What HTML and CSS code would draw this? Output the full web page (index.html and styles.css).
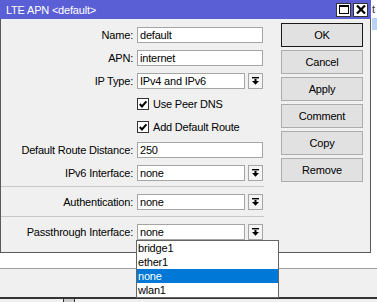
FILE: index.html
```html
<!DOCTYPE html>
<html>
<head>
<meta charset="utf-8">
<link rel="stylesheet" href="styles.css">
</head>
<body>
<div class="screen">
  <div class="top">
    <div class="win">
      <div class="titlebar">
        <span class="title">LTE APN &lt;default&gt;</span>
        <div class="tb-btns">
          <span class="tb-btn"><svg width="10" height="9" viewBox="0 0 10 9"><rect x="0.5" y="0.5" width="9" height="8" fill="none" stroke="#000" stroke-width="1"/><rect x="0" y="0" width="10" height="2" fill="#000"/></svg></span>
          <span class="tb-btn"><svg width="10" height="9" viewBox="0 0 10 9"><path d="M1 0.5 L9 8.5 M9 0.5 L1 8.5" stroke="#000" stroke-width="2.2" fill="none"/></svg></span>
        </div>
      </div>
      <div class="body">
        <div class="form">
          <div class="row"><label class="lbl">Name:</label><div class="tb">default</div></div>
          <div class="row"><label class="lbl">APN:</label><div class="tb">internet</div></div>
          <div class="row"><label class="lbl">IP Type:</label><div class="combo"><div class="tb">IPv4 and IPv6</div><span class="arrow"><svg width="7" height="8" viewBox="0 0 7 8"><rect x="0" y="0" width="7" height="1.4" fill="#000"/><rect x="2.5" y="2" width="2" height="2.5" fill="#000"/><polygon points="0,4 7,4 3.5,7.8" fill="#000"/></svg></span></div></div>
          <div class="row"><span></span><div class="chk"><span class="box"><svg width="10" height="10" viewBox="0 0 10 10"><path d="M1.8 5 L4 7.4 L8.4 2.4" stroke="#000" stroke-width="2" fill="none"/></svg></span><span>Use Peer DNS</span></div></div>
          <div class="row"><span></span><div class="chk"><span class="box"><svg width="10" height="10" viewBox="0 0 10 10"><path d="M1.8 5 L4 7.4 L8.4 2.4" stroke="#000" stroke-width="2" fill="none"/></svg></span><span>Add Default Route</span></div></div>
          <div class="row"><label class="lbl">Default Route Distance:</label><div class="tb">250</div></div>
          <div class="row"><label class="lbl">IPv6 Interface:</label><div class="combo"><div class="tb">none</div><span class="arrow"><svg width="7" height="8" viewBox="0 0 7 8"><rect x="0" y="0" width="7" height="1.4" fill="#000"/><rect x="2.5" y="2" width="2" height="2.5" fill="#000"/><polygon points="0,4 7,4 3.5,7.8" fill="#000"/></svg></span></div></div>
          <div class="sep"></div>
          <div class="row"><label class="lbl">Authentication:</label><div class="combo"><div class="tb">none</div><span class="arrow"><svg width="7" height="8" viewBox="0 0 7 8"><rect x="0" y="0" width="7" height="1.4" fill="#000"/><rect x="2.5" y="2" width="2" height="2.5" fill="#000"/><polygon points="0,4 7,4 3.5,7.8" fill="#000"/></svg></span></div></div>
          <div class="sep sep2"></div>
          <div class="row"><label class="lbl">Passthrough Interface:</label><div class="combo"><div class="tb">none</div><span class="arrow"><svg width="7" height="8" viewBox="0 0 7 8"><rect x="0" y="0" width="7" height="1.4" fill="#000"/><rect x="2.5" y="2" width="2" height="2.5" fill="#000"/><polygon points="0,4 7,4 3.5,7.8" fill="#000"/></svg></span></div></div>
        </div>
        <div class="buttons">
          <div class="btn default">OK</div>
          <div class="btn">Cancel</div>
          <div class="btn">Apply</div>
          <div class="btn">Comment</div>
          <div class="btn">Copy</div>
          <div class="btn">Remove</div>
        </div>
      </div>
    </div>
    <div class="side">
      <span class="side-t">t</span>
      <div class="side-sel"></div>
    </div>
  </div>
  <div class="under">
    <div class="u-white"></div>
    <div class="u-gray"></div>
    <div class="u-dark"></div>
    <div class="u-foot"><span class="u-knob"></span></div>
  </div>
  <ul class="dropdown">
    <li>bridge1</li>
    <li>ether1</li>
    <li class="sel">none</li>
    <li>wlan1</li>
  </ul>
</div>
</body>
</html>
```
FILE: styles.css
```css
* { box-sizing: border-box; }
html, body { margin: 0; padding: 0; }
body {
  width: 377px;
  height: 302px;
  overflow: hidden;
  background: #fff;
  font-family: "Liberation Sans", Arial, sans-serif;
  font-size: 11px;
  letter-spacing: -0.2px;
  color: #000;
}
.screen {
  position: relative;
  width: 377px;
  height: 302px;
  display: flex;
  flex-direction: column;
}
.top {
  display: flex;
  height: 253px;
}
.win {
  width: 371px;
  height: 253px;
  display: flex;
  flex-direction: column;
  background: #f0f0f0;
  border: 1px solid #5a5a5a;
  border-top: none;
}
.titlebar {
  height: 19px;
  margin: 0 -1px;
  background: #5a5fd6;
  color: #fff;
  display: flex;
  align-items: center;
  justify-content: space-between;
  padding: 0 3px 0 6px;
}
.title { font-size: 11px; }
.tb-btns { display: flex; gap: 2px; }
.tb-btn {
  width: 15px;
  height: 14px;
  background: #fff;
  border: 1px solid #333;
  display: flex;
  align-items: center;
  justify-content: center;
}
.body {
  flex: 1;
  display: flex;
  padding-top: 4px;
}
.form {
  width: 263px;
  display: flex;
  flex-direction: column;
}
.row {
  height: 23px;
  display: grid;
  grid-template-columns: 132px 126px;
  column-gap: 4px;
  align-items: center;
}
.lbl { text-align: right; white-space: nowrap; }
.tb {
  height: 16px;
  background: #fff;
  border: 1px solid #a5a5a5;
  padding: 0 2px;
  line-height: 14px;
  white-space: nowrap;
  overflow: hidden;
}
.combo {
  display: grid;
  grid-template-columns: 108px 15px;
  column-gap: 3px;
}
.arrow {
  height: 16px;
  border: 1px solid #a5a5a5;
  background: #f4f4f4;
  display: flex;
  align-items: center;
  justify-content: center;
}
.chk {
  display: flex;
  align-items: center;
  gap: 4px;
}
.box {
  width: 12px;
  height: 12px;
  border: 1px solid #333;
  background: #fff;
  display: flex;
  align-items: center;
  justify-content: center;
}
.sep {
  height: 1px;
  background: #c8c8c8;
  margin: 2px 0 3px;
}
.sep2 { margin: 3px 0 3px; }
.buttons {
  margin-left: 17px;
  width: 82px;
  display: flex;
  flex-direction: column;
  gap: 3px;
}
.btn {
  height: 24px;
  background: #e1e1e1;
  border: 1px solid #adadad;
  display: flex;
  align-items: center;
  justify-content: center;
  font-size: 11px;
}
.btn.default { border-color: #1a1a1a; }
.side {
  flex: 1;
  display: flex;
  flex-direction: column;
  padding-left: 1px;
}
.side-t { height: 18px; line-height: 18px; font-size: 11px; color: #333; }
.side-sel { height: 12px; background: #b8d4f4; }
.under {
  flex: 1;
  display: flex;
  flex-direction: column;
}
.u-white { height: 15px; background: #fff; }
.u-gray { height: 29px; background: #f0f0f0; border-top: 1px solid #a0a0a0; }
.u-dark { height: 2px; background: #333; }
.u-foot { flex: 1; background: #f0f0f0; position: relative; }
.u-knob {
  position: absolute;
  left: 63px;
  top: 0;
  width: 12px;
  height: 4px;
  border: 1px solid #333;
  border-top: none;
  background: #ccc;
}
.dropdown {
  position: absolute;
  left: 136px;
  top: 240px;
  width: 143px;
  margin: 0;
  padding: 0;
  list-style: none;
  background: #fff;
  border: 1px solid #646464;
}
.dropdown li {
  height: 14px;
  line-height: 14px;
  padding-left: 1px;
}
.dropdown li.sel { background: #0078d7; color: #fff; }
```
